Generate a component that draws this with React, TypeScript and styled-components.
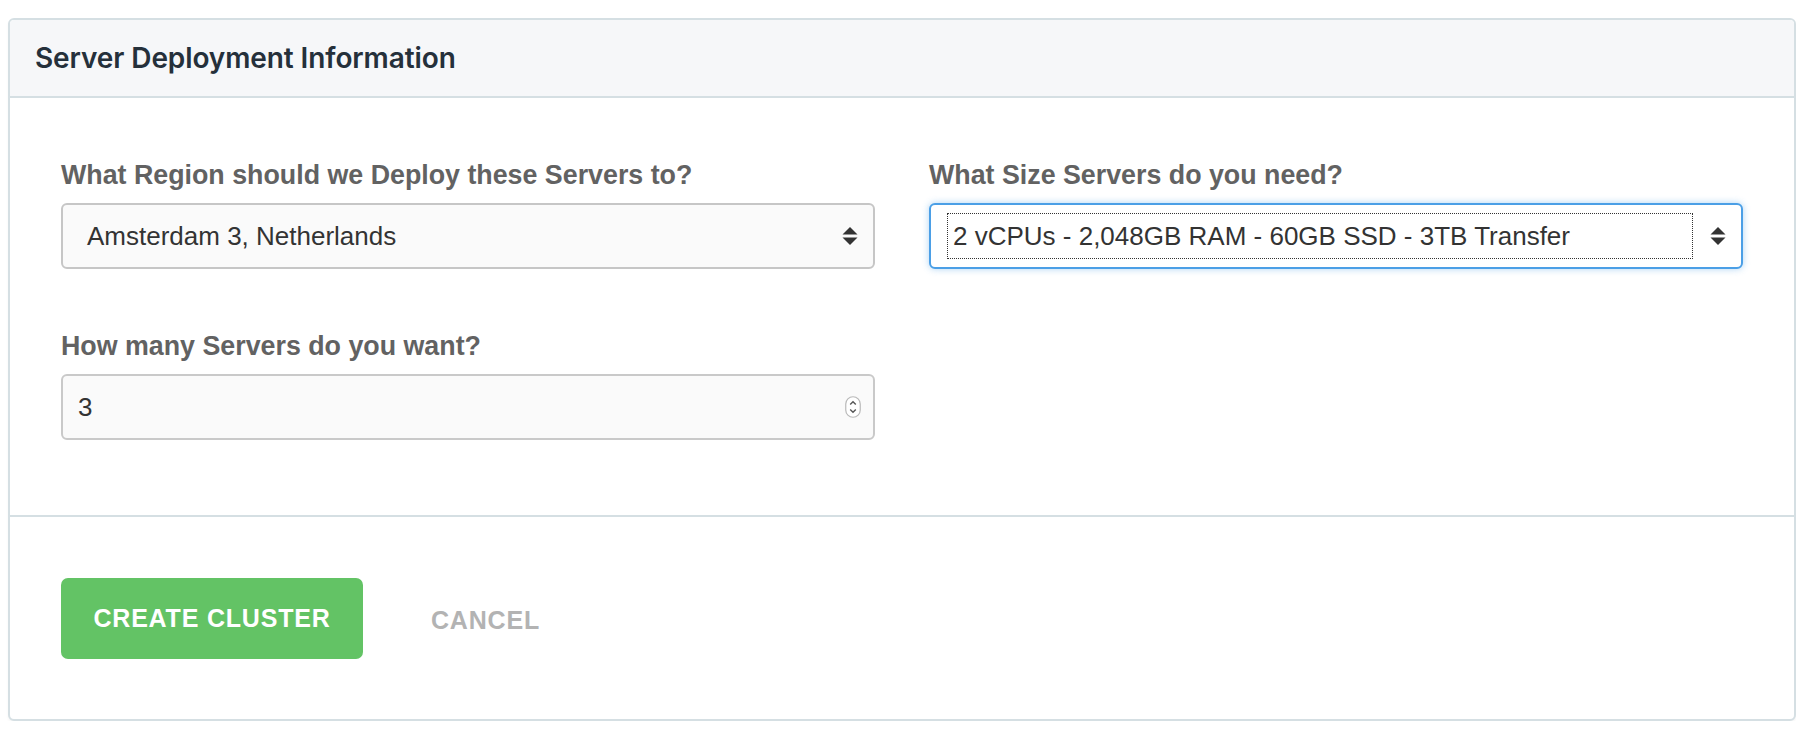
import styled, { createGlobalStyle } from 'styled-components';

const GlobalStyle = createGlobalStyle`
  html, body {
    margin: 0;
    padding: 0;
    background: #ffffff;
    font-family: 'Liberation Sans', Arial, sans-serif;
  }
`;

const SelectArrows = () => (
  <svg width="16" height="20" viewBox="0 0 16 20" aria-hidden="true">
    <path d="M0.5 8.5 L8 1 L15.5 8.5 Z" fill="#333" />
    <path d="M0.5 11.5 L8 19 L15.5 11.5 Z" fill="#333" />
  </svg>
);

const Spinner = () => (
  <svg width="16" height="22" viewBox="0 0 16 22" aria-hidden="true">
    <rect x="0.75" y="0.75" width="14.5" height="20.5" rx="7.25" fill="#fff" stroke="#b9b9b9" strokeWidth="1.2" />
    <path d="M5.2 8.6 L8 5.8 L10.8 8.6" fill="none" stroke="#555" strokeWidth="1.4" />
    <path d="M5.2 13.4 L8 16.2 L10.8 13.4" fill="none" stroke="#555" strokeWidth="1.4" />
  </svg>
);

const App = () => (
  <>
    <GlobalStyle />
    <Card>
      <Header>
        <Title>Server Deployment Information</Title>
      </Header>
      <Body>
        <Field>
          <Label>What Region should we Deploy these Servers to?</Label>
          <SelectBox>
            <SelectValue>Amsterdam 3, Netherlands</SelectValue>
            <SelectArrows />
          </SelectBox>
        </Field>
        <Field>
          <Label>What Size Servers do you need?</Label>
          <SelectBox $focused>
            <FocusRing>
              <SelectValue>2 vCPUs - 2,048GB RAM - 60GB SSD - 3TB Transfer</SelectValue>
            </FocusRing>
            <SelectArrows />
          </SelectBox>
        </Field>
        <Field>
          <Label>How many Servers do you want?</Label>
          <NumberBox>
            <SelectValue>3</SelectValue>
            <Spinner />
          </NumberBox>
        </Field>
      </Body>
      <Footer>
        <PrimaryButton type="button">Create Cluster</PrimaryButton>
        <TextButton type="button">Cancel</TextButton>
      </Footer>
    </Card>
  </>
);

const Card = styled.div`
  margin: 18px 0 0 8px;
  border: 2px solid #d5dfe3;
  border-radius: 6px;
  background: #fff;
  box-shadow: 0 2px 3px rgba(0, 0, 0, 0.04);
  overflow: hidden;
`;

const Header = styled.div`
  height: 76px;
  display: flex;
  align-items: center;
  padding: 0 25px;
  background: #f6f7f9;
  border-bottom: 2px solid #d5dfe3;
`;

const Title = styled.h2`
  margin: 0;
  font-family: Inter, 'Liberation Sans', sans-serif;
  font-weight: 600;
  font-size: 28px;
  color: #25303b;
  letter-spacing: -0.1px;
`;

const Body = styled.div`
  display: grid;
  grid-template-columns: 1fr 1fr;
  column-gap: 54px;
  row-gap: 61px;
  padding: 61px 51px 75px;
  border-bottom: 2px solid #d5dfe3;
`;

const Field = styled.div`
  display: flex;
  flex-direction: column;
  gap: 12px;
`;

const Label = styled.label`
  font-size: 26.8px;
  line-height: 32px;
  font-weight: 700;
  color: #626262;
`;

const SelectBox = styled.div<{ $focused?: boolean }>`
  height: 66px;
  box-sizing: border-box;
  display: flex;
  align-items: center;
  gap: 17px;
  padding: ${({ $focused }) => ($focused ? '0 15px 0 16px' : '0 15px 0 24px')};
  border: 2px solid ${({ $focused }) => ($focused ? '#4b9fe6' : '#c6c6c6')};
  border-radius: 6px;
  background: ${({ $focused }) => ($focused ? '#ffffff' : '#fafafa')};
  box-shadow: ${({ $focused }) => ($focused ? '0 0 7px rgba(75, 159, 230, 0.45)' : 'none')};
`;

const FocusRing = styled.div`
  flex: 1;
  height: 46px;
  box-sizing: border-box;
  display: flex;
  align-items: center;
  padding: 0 5px;
  border: 1px dotted #333;
`;

const SelectValue = styled.span`
  flex: 1;
  font-size: 26px;
  color: #333;
  white-space: nowrap;
`;

const NumberBox = styled.div`
  height: 66px;
  box-sizing: border-box;
  display: flex;
  align-items: center;
  padding: 0 12px 0 15px;
  border: 2px solid #c9c9c9;
  border-radius: 6px;
  background: #fafafa;
`;

const Footer = styled.div`
  display: flex;
  align-items: center;
  gap: 68px;
  padding: 61px 51px 60px;
`;

const PrimaryButton = styled.button`
  width: 302px;
  height: 81px;
  border: none;
  border-radius: 7px;
  background: #63c365;
  color: #fff;
  font-family: 'Liberation Sans', Arial, sans-serif;
  font-weight: 700;
  font-size: 25px;
  letter-spacing: 0.8px;
  text-transform: uppercase;
  cursor: pointer;
`;

const TextButton = styled.button`
  padding: 4px 0 0;
  border: none;
  background: none;
  color: #b3b3b3;
  font-family: 'Liberation Sans', Arial, sans-serif;
  font-weight: 700;
  font-size: 25px;
  letter-spacing: 0.8px;
  text-transform: uppercase;
  cursor: pointer;
`;

export default App;
